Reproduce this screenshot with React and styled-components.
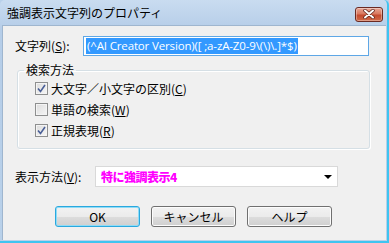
import React, { useState } from 'react';
import styled, { createGlobalStyle } from 'styled-components';

const GlobalStyle = createGlobalStyle`
  html, body {
    margin: 0;
    padding: 0;
    background: #b9d1ea;
  }
  body {
    font-family: "Noto Sans CJK JP", "Noto Sans", sans-serif;
    font-size: 12px;
    color: #000;
  }
`;

const jp = `"Noto Sans CJK JP", "Noto Sans", sans-serif`;

const Window = styled.div`
  width: 389px;
  height: 243px;
  box-sizing: border-box;
  display: flex;
  flex-direction: column;
  background: linear-gradient(#c9dcf0, #b5cde8 30px, #b9d1ea);
  border-right: 2px solid #3fc4f0;
  border-bottom: 2px solid #3fc4f0;
  border-top-left-radius: 5px;
  border-top-right-radius: 5px;
  overflow: hidden;
`;

const TitleBar = styled.div`
  height: 25px;
  display: flex;
  align-items: center;
  justify-content: space-between;
  padding: 0 4px 0 7px;
  flex-shrink: 0;
`;

const Title = styled.span`
  font-family: ${jp};
  font-size: 12px;
  line-height: 14px;
  color: #000;
  margin-top: 1px;
`;

const CloseButton = styled.div`
  width: 28px;
  height: 15px;
  box-sizing: border-box;
  border: 1px solid #6b2a22;
  border-radius: 3px;
  background: linear-gradient(#e8a796 0%, #d9785f 45%, #c44a2f 55%, #d06a48 100%);
  box-shadow: inset 0 0 0 1px rgba(255, 255, 255, 0.35);
  display: flex;
  align-items: center;
  justify-content: center;
  margin-top: 3px;
`;

const Client = styled.div`
  flex: 1;
  margin: 0 1px 1px 2px;
  background: #f0f0f0;
  border-top: 1px solid #9fb6cf;
  border-left: 1px solid #9fb6cf;
  display: flex;
  flex-direction: column;
`;

const FieldRow = styled.div`
  display: flex;
  align-items: center;
  padding-left: 12px;
  margin-top: ${p => p.$top}px;
`;

const Label = styled.span`
  font-family: ${jp};
  font-size: 12px;
  line-height: 14px;
  width: ${p => p.$width}px;
  flex-shrink: 0;
  white-space: nowrap;

  u {
    text-underline-offset: 1px;
  }
`;

const TextBox = styled.div`
  width: 286px;
  height: 20px;
  box-sizing: border-box;
  border: 1px solid #5ea7e6;
  background: #fff;
  padding: 1px 2px;
  display: flex;
  align-items: center;
`;

const Selected = styled.span`
  background: #3399ff;
  color: #fff;
  font-family: "Open Sans", "Noto Sans", sans-serif;
  font-size: 11.5px;
  line-height: 16px;
  padding: 0 1px;
  white-space: nowrap;
  letter-spacing: -0.15px;
`;

const Group = styled.fieldset`
  margin: 7px 16px 0 14px;
  padding: 1px 0 7px 17px;
  border: 1px solid #d5dfe5;
  border-radius: 3px;
  box-shadow: inset 1px 1px 0 #fff, 1px 1px 0 #fff;
  min-width: 0;
`;

const Legend = styled.legend`
  font-family: ${jp};
  font-size: 12px;
  line-height: 14px;
  padding: 0 2px;
  margin-left: -11px;
`;

const CheckRow = styled.label`
  height: 21px;
  display: flex;
  align-items: center;
  gap: 3px;
  font-family: ${jp};
  font-size: 12px;
  line-height: 14px;
  cursor: default;
`;

const Box = styled.span`
  width: 13px;
  height: 13px;
  box-sizing: border-box;
  border: 1px solid #8e8f8f;
  background: linear-gradient(135deg, #dcdcdc, #f6f6f6);
  box-shadow: inset 0 0 0 1px #f4f4f4;
  display: flex;
  align-items: center;
  justify-content: center;
`;

const Combo = styled.div`
  width: 243px;
  height: 21px;
  box-sizing: border-box;
  border: 1px solid #d9d9d9;
  background: #fff;
  display: flex;
  align-items: center;
  justify-content: space-between;
  padding: 0 5px 0 5px;
`;

const ComboText = styled.span`
  font-family: ${jp};
  font-weight: 900;
  font-size: 12px;
  line-height: 14px;
  color: #ff00ff;
  letter-spacing: -0.5px;
`;

const Arrow = styled.span`
  width: 0;
  height: 0;
  border-left: 4px solid transparent;
  border-right: 4px solid transparent;
  border-top: 4px solid #000;
  margin-top: 1px;
`;

const ButtonRow = styled.div`
  display: flex;
  gap: 11px;
  padding-left: 52px;
  margin-top: 19px;
`;

const Button = styled.button`
  width: ${p => p.$width || 85}px;
  height: 21px;
  box-sizing: border-box;
  border: 1px solid ${p => (p.$default ? '#2aa8de' : '#707070')};
  border-radius: 3px;
  background: linear-gradient(#f2f2f2 0%, #ebebeb 50%, #dddddd 50%, #cfcfcf 100%);
  box-shadow: inset 0 0 0 1px ${p => (p.$default ? '#8fdcf7' : '#fcfcfc')};
  font-family: ${jp};
  font-size: 12px;
  line-height: 14px;
  color: #000;
  padding: 0;
`;

const CheckMark = () => (
  <svg width="9" height="9" viewBox="0 0 9 9">
    <path d="M1 4.5 L3.5 7.5 L8 1" fill="none" stroke="#4a5f97" strokeWidth="1.6" />
  </svg>
);

const CloseIcon = () => (
  <svg width="12" height="10" viewBox="0 0 12 10">
    <path d="M2 1.5 L10 8.5 M10 1.5 L2 8.5" stroke="#5a2018" strokeWidth="3.4" strokeLinecap="round" />
    <path d="M2 1.5 L10 8.5 M10 1.5 L2 8.5" stroke="#fff" strokeWidth="2" strokeLinecap="round" />
  </svg>
);

const options = [
  { id: 'case', text: '大文字／小文字の区別', key: 'C', checked: true },
  { id: 'word', text: '単語の検索', key: 'W', checked: false },
  { id: 'regex', text: '正規表現', key: 'R', checked: true },
];

const App = () => {
  const [checks, setChecks] = useState(
    options.reduce((acc, o) => ({ ...acc, [o.id]: o.checked }), {})
  );

  function toggle(id) {
    setChecks({ ...checks, [id]: !checks[id] });
  }

  return (
    <>
      <GlobalStyle />
      <Window>
        <TitleBar>
          <Title>強調表示文字列のプロパティ</Title>
          <CloseButton>
            <CloseIcon />
          </CloseButton>
        </TitleBar>
        <Client>
          <FieldRow $top={10}>
            <Label $width={68}>
              文字列(<u>S</u>):
            </Label>
            <TextBox>
              <Selected>(^AI Creator Version)([ ;a-zA-Z0-9\(\)\.]*$)</Selected>
            </TextBox>
          </FieldRow>

          <Group>
            <Legend>検索方法</Legend>
            {options.map(o => (
              <CheckRow key={o.id} onClick={() => toggle(o.id)}>
                <Box>{checks[o.id] && <CheckMark />}</Box>
                <span>
                  {o.text}(<u>{o.key}</u>)
                </span>
              </CheckRow>
            ))}
          </Group>

          <FieldRow $top={17}>
            <Label $width={80}>
              表示方法(<u>V</u>):
            </Label>
            <Combo>
              <ComboText>特に強調表示4</ComboText>
              <Arrow />
            </Combo>
          </FieldRow>

          <ButtonRow>
            <Button $default>OK</Button>
            <Button>キャンセル</Button>
            <Button>ヘルプ</Button>
          </ButtonRow>
        </Client>
      </Window>
    </>
  );
};

export default App;
